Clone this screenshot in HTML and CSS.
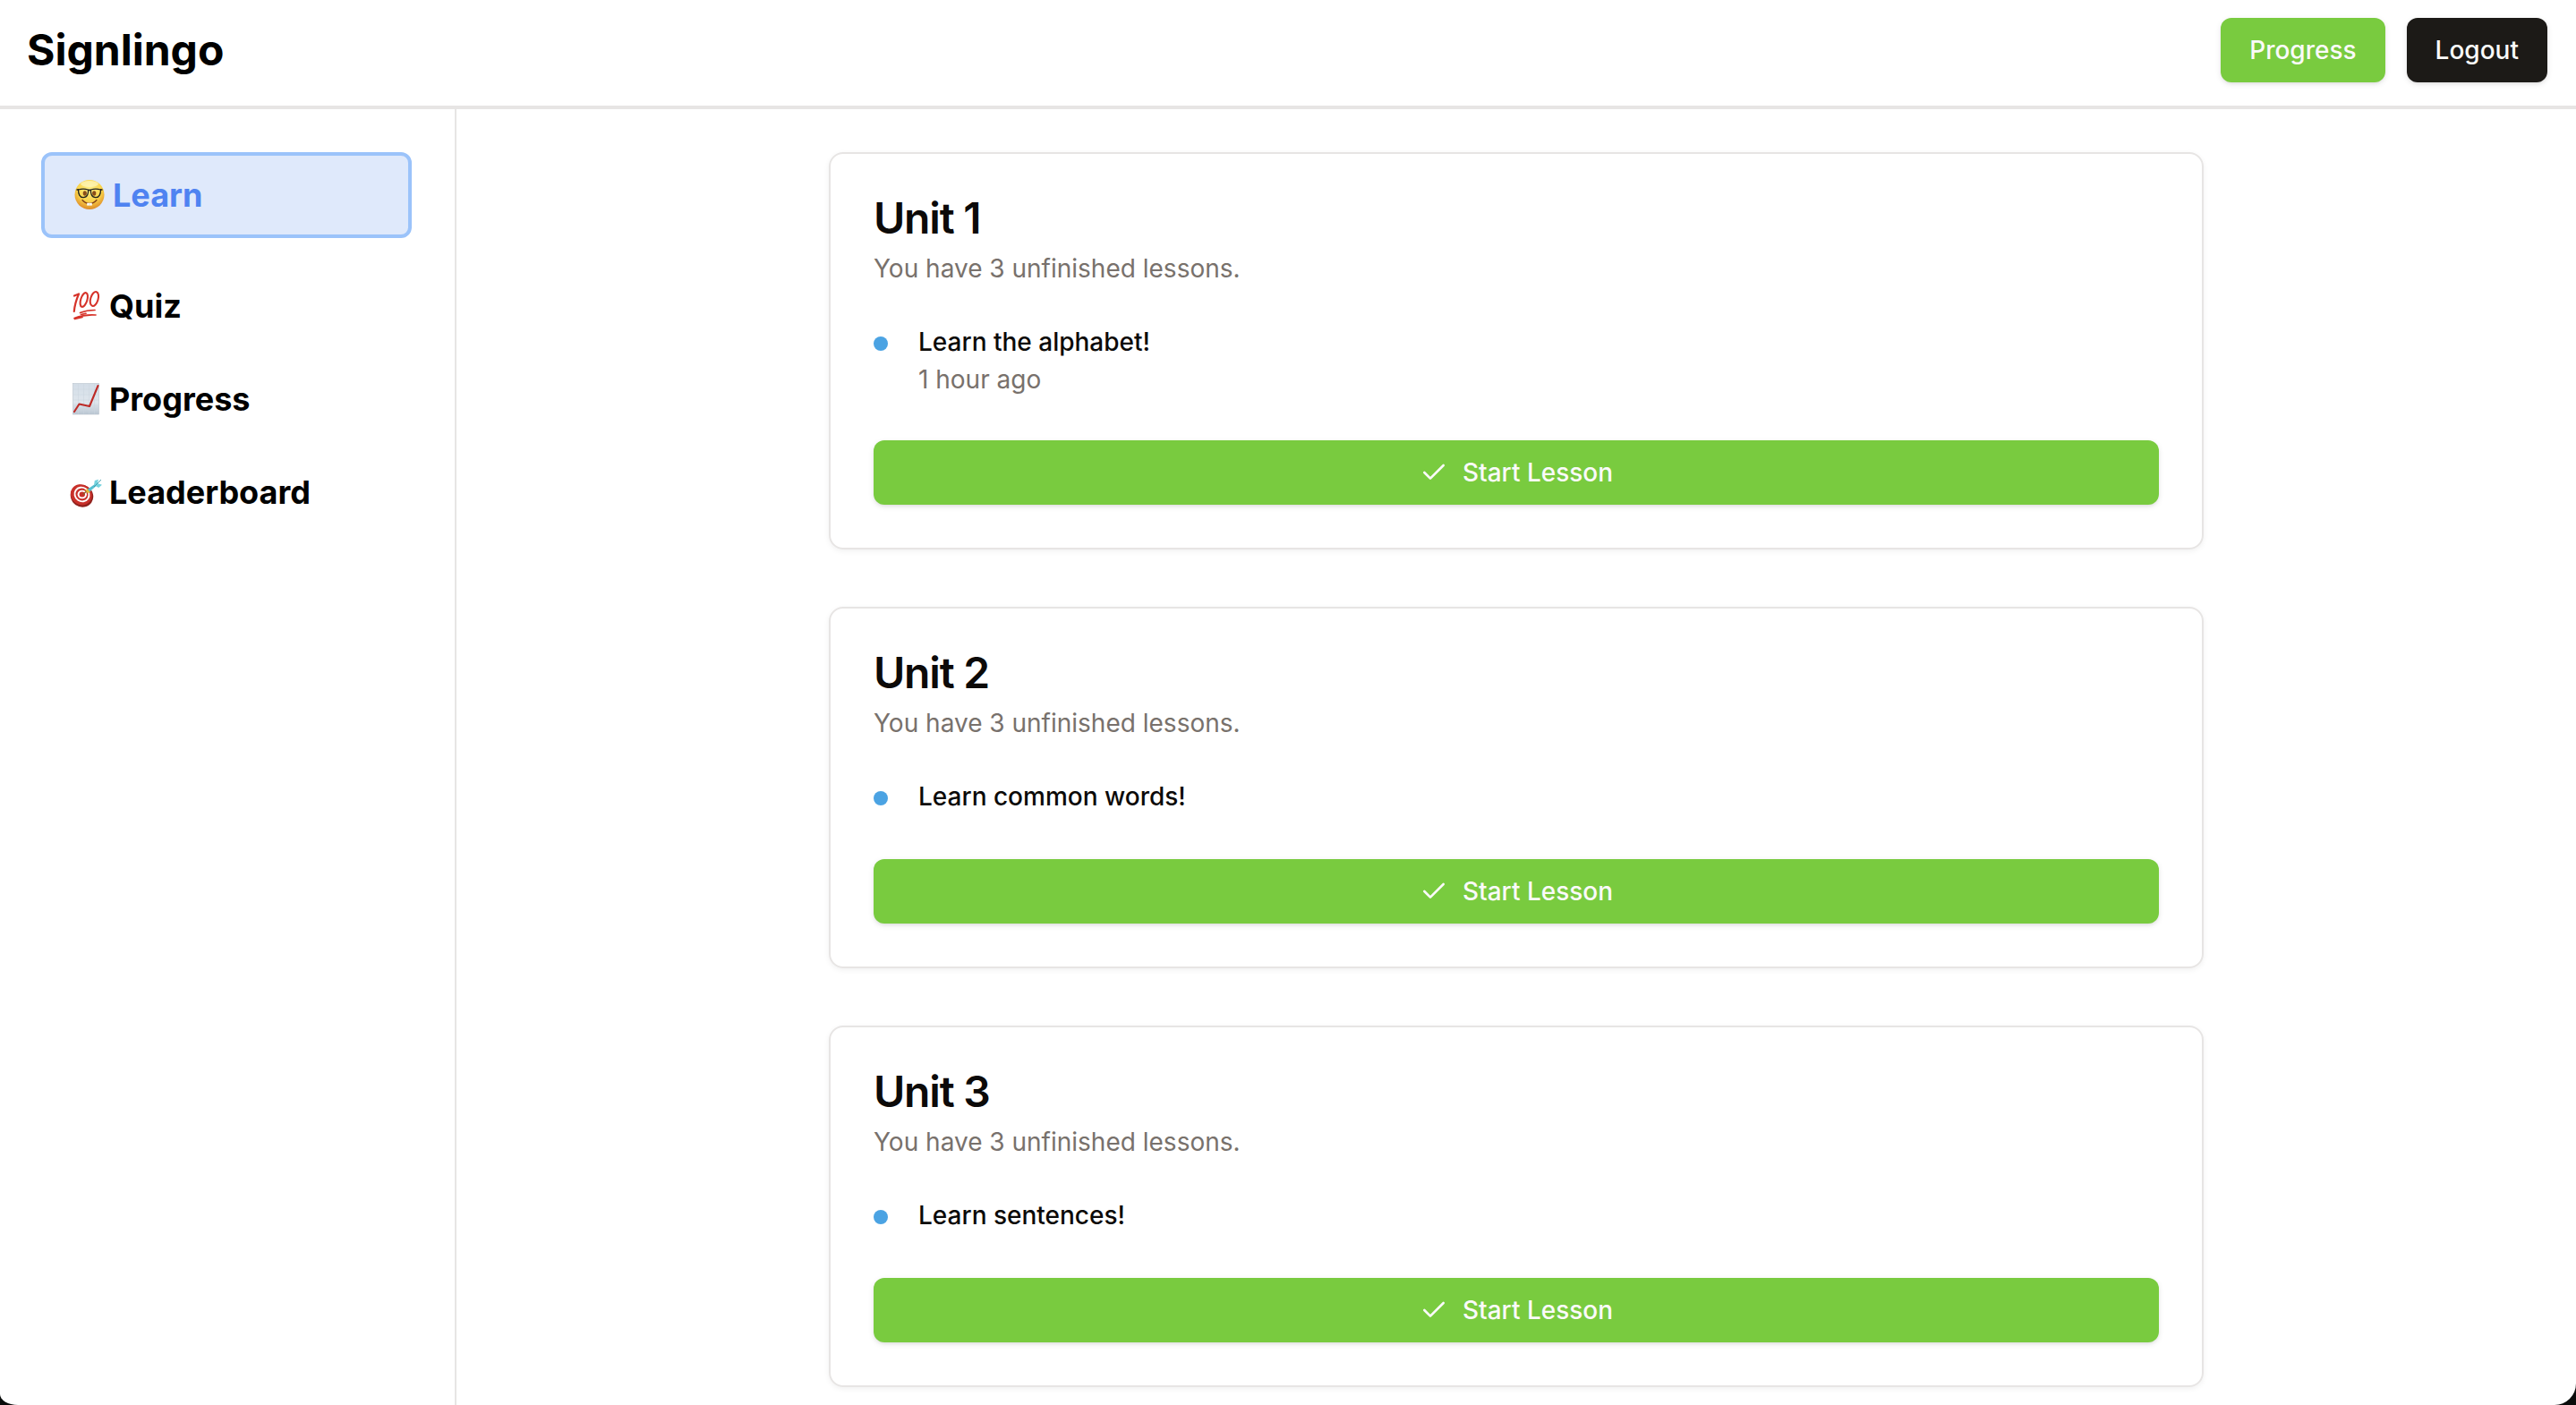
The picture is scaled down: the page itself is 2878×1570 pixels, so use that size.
FILE: index.html
```html
<!DOCTYPE html>
<html lang="en">
<head>
<meta charset="utf-8">
<meta name="viewport" content="width=device-width, initial-scale=1">
<title>Signlingo</title>
<link rel="stylesheet" href="styles.css">
</head>
<body>
<svg class="sprite" aria-hidden="true">
  <symbol id="check" viewBox="0 0 24 24"><path d="M20 6 9 17l-5-5" fill="none" stroke="currentColor" stroke-width="2" stroke-linecap="round" stroke-linejoin="round"/></symbol>
</svg>
<div class="app">
  <header class="topbar">
    <h1 class="brand">Signlingo</h1>
    <div class="actions">
      <button class="btn btn-green" type="button">Progress</button>
      <button class="btn btn-dark" type="button">Logout</button>
    </div>
  </header>
  <div class="body">
    <nav class="sidebar">
      <a class="nav-item active" href="#learn">
        <svg class="emoji" viewBox="0 0 36 36" aria-hidden="true">
          <defs>
            <radialGradient id="face" cx="50%" cy="32%" r="68%"><stop offset="0" stop-color="#fdf08a"/><stop offset=".6" stop-color="#f9d34a"/><stop offset="1" stop-color="#dd8a28"/></radialGradient>
          </defs>
          <circle cx="18" cy="17.5" r="16.5" fill="url(#face)"/>
          <ellipse cx="18" cy="5.5" rx="10" ry="3.5" fill="#fffbd0" opacity=".6"/>
          <ellipse cx="12.8" cy="16" rx="2.1" ry="2.8" fill="#8a4d18"/>
          <ellipse cx="23.2" cy="16" rx="2.1" ry="2.8" fill="#8a4d18"/>
          <g fill="none" stroke="#20211d" stroke-width="1.3">
            <path d="M5.500 12c3-1 8-1 11 0 .5 4-.8 8.600-5.300 8.700C7 20.800 5.500 16.500 5.500 12z"/>
            <path d="M30.500 12c-3-1-8-1-11 0-.5 4 .8 8.600 5.300 8.700 4.200.1 5.700-4.200 5.700-8.700z"/>
          </g>
          <path d="M3.500 12h2.500M30 12h2.500M16.500 12.800c1-.7 2-.7 3 0" fill="none" stroke="#20211d" stroke-width="1.600"/>
          <path d="M10 23.500c4 5.200 12 5.200 16 0" fill="none" stroke="#80401a" stroke-width="1.300" stroke-linecap="round"/>
          <path d="M15.200 26.800h5.600v2.800h-5.600z" fill="#fff"/><path d="M18 26.800v2.800" stroke="#b9b9ac" stroke-width=".5"/>
        </svg>
        <span>Learn</span>
      </a>
      <a class="nav-item" href="#quiz">
        <svg class="emoji" viewBox="0 0 36 36" aria-hidden="true">
          <g fill="none" stroke="#d6332a" stroke-linecap="round" stroke-linejoin="round">
            <path d="M5 6.500 10 4.500Q5.500 15 4.800 24" stroke-width="2.200"/>
            <ellipse cx="15.800" cy="11" rx="3.600" ry="8.200" transform="rotate(17 15.800 11)" stroke-width="2.100"/>
            <ellipse cx="27.400" cy="10" rx="4.200" ry="8.200" transform="rotate(17 27.400 10)" stroke-width="2.100"/>
            <path d="M11.500 25.500Q19 22.500 28 22.500M12.500 27.500 18 26.300" stroke-width="1.700"/>
            <path d="M5 31.500Q17 27 29 28M5.500 32.500 14 30.500" stroke-width="1.700"/>
          </g>
        </svg>
        <span>Quiz</span>
      </a>
      <a class="nav-item" href="#progress">
        <svg class="emoji" viewBox="0 0 36 36" aria-hidden="true">
          <defs><linearGradient id="paper" x1="0" y1="0" x2="0" y2="1"><stop offset="0" stop-color="#d3dde7"/><stop offset=".6" stop-color="#dfe6ed"/><stop offset="1" stop-color="#bac6d2"/></linearGradient></defs>
          <rect x="3.500" y=".5" width="29" height="34.500" fill="url(#paper)" stroke="#b9c4ce" stroke-width=".6"/>
          <path d="M9.500 1v33.500M15.500 1v33.500M21.500 1v33.500M27.500 1v33.500M4 7h28M4 13h28M4 19h28M4 25h28M4 31h28" stroke="#cad5df" stroke-width=".5"/>
          <path d="M5 32 10.500 23.500 22 26 31.500 3" fill="none" stroke="#bd2a26" stroke-width="2.100" stroke-linecap="round" stroke-linejoin="round"/>
        </svg>
        <span>Progress</span>
      </a>
      <a class="nav-item" href="#leaderboard">
        <svg class="emoji" viewBox="0 0 36 36" aria-hidden="true">
          <ellipse cx="13.500" cy="22.200" rx="13" ry="12.200" fill="#8f211d" transform="rotate(35 13.500 22.200)"/>
          <ellipse cx="12.800" cy="20.800" rx="12.300" ry="11.300" fill="#c8302a" transform="rotate(35 12.800 20.800)"/>
          <ellipse cx="13.500" cy="20.500" rx="9.200" ry="8.500" fill="#fff" transform="rotate(35 13.500 20.500)"/>
          <ellipse cx="13.500" cy="20.500" rx="7.200" ry="6.700" fill="#c8302a" transform="rotate(35 13.500 20.500)"/>
          <ellipse cx="13.800" cy="20.500" rx="5.200" ry="4.800" fill="#fff"/>
          <ellipse cx="13.800" cy="20.500" rx="3.200" ry="3" fill="#c8302a"/>
          <path d="m14.500 20.500 6-5" stroke="#8a5a26" stroke-width="1.200"/>
          <path d="m18.500 15 3 3.500" stroke="#e3bd37" stroke-width="3"/>
          <path d="M20 14.500 28 9l1.500 2-7.500 6.500z" fill="#55bfd0"/>
          <path d="m27 10 .8-5L32 3.800 30.800 8 36 9.800l-3.800 3.200z" fill="#74d2de"/>
          <path d="m27 12 8-8" stroke="#3798a9" stroke-width=".9"/>
        </svg>
        <span>Leaderboard</span>
      </a>
    </nav>
    <main class="units">
      <section class="card">
        <h2 class="card-title">Unit 1</h2>
        <p class="muted">You have 3 unfinished lessons.</p>
        <div class="lesson">
          <span class="dot"></span>
          <div>
            <p class="lesson-title">Learn the alphabet!</p>
            <p class="muted">1 hour ago</p>
          </div>
        </div>
        <button class="btn btn-green" type="button"><svg class="icon" aria-hidden="true"><use href="#check"/></svg>Start Lesson</button>
      </section>
      <section class="card">
        <h2 class="card-title">Unit 2</h2>
        <p class="muted">You have 3 unfinished lessons.</p>
        <div class="lesson">
          <span class="dot"></span>
          <div>
            <p class="lesson-title">Learn common words!</p>
          </div>
        </div>
        <button class="btn btn-green" type="button"><svg class="icon" aria-hidden="true"><use href="#check"/></svg>Start Lesson</button>
      </section>
      <section class="card">
        <h2 class="card-title">Unit 3</h2>
        <p class="muted">You have 3 unfinished lessons.</p>
        <div class="lesson">
          <span class="dot"></span>
          <div>
            <p class="lesson-title">Learn sentences!</p>
          </div>
        </div>
        <button class="btn btn-green" type="button"><svg class="icon" aria-hidden="true"><use href="#check"/></svg>Start Lesson</button>
      </section>
    </main>
  </div>
</div>
</body>
</html>
```

FILE: styles.css
```css
* {
  box-sizing: border-box;
  margin: 0;
}

html {
  background: #0a0c0b;
}

body {
  font-family: Inter, "Liberation Sans", sans-serif;
  font-size: 28px;
  line-height: 40px;
  color: #0c0a09;
}

.sprite {
  display: none;
}

.app {
  display: flex;
  flex-direction: column;
  min-height: 100vh;
  background: #fff;
  border-radius: 0 0 24px 20px / 0 0 24px 12px;
}

.topbar {
  display: flex;
  align-items: center;
  justify-content: space-between;
  padding: 20px 32px 26px 30px;
  border-bottom: 4px solid #e7e5e4;
}

.brand {
  font-size: 48px;
  line-height: 64px;
  font-weight: 700;
  color: #000;
}

.actions {
  display: flex;
  gap: 24px;
}

.btn {
  display: flex;
  align-items: center;
  justify-content: center;
  gap: 16px;
  height: 72px;
  padding: 0 32px;
  border: 0;
  border-radius: 12px;
  font: inherit;
  font-weight: 500;
  color: #fafaf9;
  box-shadow: 0 2px 6px rgba(0, 0, 0, 0.1), 0 2px 4px -2px rgba(0, 0, 0, 0.1);
  cursor: pointer;
}

.btn-green {
  background: #79cb3f;
}

.btn-dark {
  background: #1c1a17;
}

.icon {
  width: 32px;
  height: 32px;
}

.body {
  display: flex;
  flex: 1;
}

.sidebar {
  display: flex;
  flex: none;
  flex-direction: column;
  gap: 16px;
  width: 510px;
  padding: 48px 48px 48px 46px;
  border-right: 2px solid #e7e5e4;
}

.nav-item {
  display: flex;
  align-items: center;
  gap: 8px;
  padding: 16px 32px;
  border-radius: 12px;
  font-size: 36px;
  line-height: 56px;
  font-weight: 700;
  color: #000;
  text-decoration: none;
}

.nav-item.active {
  margin-bottom: 16px;
  border: 4px solid #9bc3fa;
  background: #dfe9fb;
  color: #4f83f1;
}

.emoji {
  flex: none;
  width: 36px;
  height: 36px;
}

.units {
  display: flex;
  flex: 1;
  flex-direction: column;
  align-items: center;
  gap: 64px;
  padding: 48px 48px 20px;
}

.card {
  display: flex;
  flex-direction: column;
  width: 100%;
  max-width: 1536px;
  padding: 48px;
  border: 2px solid #e7e5e4;
  border-radius: 16px;
  box-shadow: 0 2px 6px rgba(0, 0, 0, 0.06);
}

.card-title {
  margin-bottom: 12px;
  font-size: 48px;
  line-height: 48px;
  font-weight: 600;
  letter-spacing: -0.025em;
}

.muted {
  color: #78716c;
}

.lesson {
  display: grid;
  grid-template-columns: 50px 1fr;
  padding: 48px 0;
}

.dot {
  width: 16px;
  height: 16px;
  margin-top: 8px;
  border-radius: 50%;
  background: #4ba3e3;
}

.lesson-title {
  margin-bottom: 8px;
  line-height: 28px;
  font-weight: 500;
}
```
